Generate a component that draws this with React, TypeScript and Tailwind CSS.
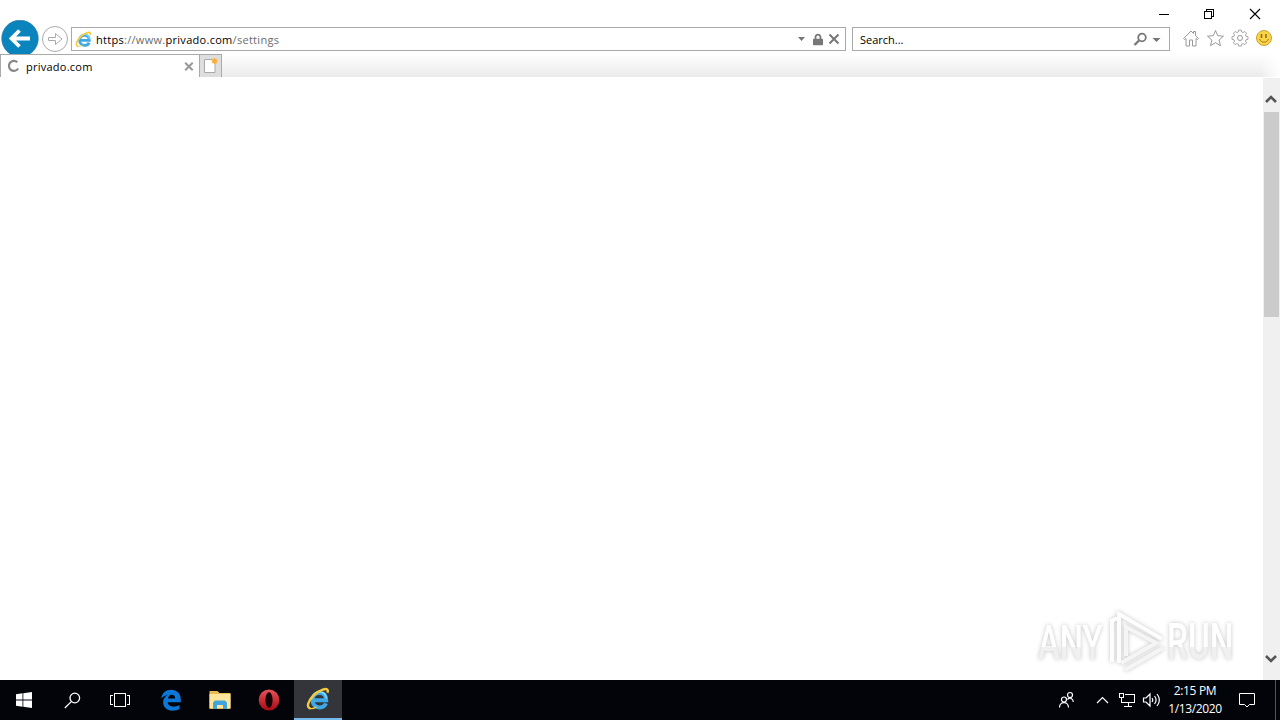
import { FaLock } from 'react-icons/fa';

function IeLogo({ size }: { size: number }) {
  return (
    <svg width={size} height={size} viewBox="0 0 24 24" fill="none">
      <path d="M6 13.300h14.200c0-4.800-2.600-7.300-6.700-7.300s-7 3-7 7 2.800 7.400 7.200 7.400c3.200 0 5.200-1.400 6.200-4" stroke="#3fa9e8" strokeWidth="4" />
      <path d="M5.500 12.500C6 8.500 9 5 13.200 5s6.800 2.800 7.200 6.500" stroke="#8adcf9" strokeWidth="1.500" />
      <path d="M4.500 21.500C-.5 20.500 2.500 13 8.500 7.500 14 2.600 20.500.8 21.600 3c.4.900.2 1.700-.2 2.700" stroke="#f3cb3c" strokeWidth="2.400" />
      <path d="M4 21.500c2 .6 4.500-.3 6.500-1.600" stroke="#f3cb3c" strokeWidth="1.300" />
    </svg>
  );
}

function TitleBar() {
  return (
    <div className="flex h-5 shrink-0 justify-end pt-2 pr-[18px]">
      <svg width="104" height="12" viewBox="0 0 104 12" fill="none" stroke="#000" shapeRendering="crispEdges">
        <path d="M1 6.500h10" />
        <path d="M46.500 3.500h7v7h-7zM48.500 3.500v-2h7v7h-2" />
        <path d="M92 1l10 10M102 1L92 11" shapeRendering="auto" strokeWidth="1.100" />
      </svg>
    </div>
  );
}

function AddressRow() {
  return (
    <div className="flex h-[34px] shrink-0 items-start">
      <svg className="shrink-0" width="71" height="38" viewBox="0 0 71 38" fill="none">
        <circle cx="20" cy="18.500" r="18.300" fill="#0a84bd" stroke="#2c739a" strokeWidth=".6" />
        <path d="M30 18.500H12M19.500 10.500l-8 8 8 8" stroke="#fff" strokeWidth="3.800" />
        <circle cx="55" cy="19" r="12.500" stroke="#aaa" />
        <path d="M48.500 17.500h7v-4l6.500 5.500-6.500 5.500v-4h-7z" stroke="#aaa" />
      </svg>
      <div className="mt-[7px] flex h-6 w-[775px] shrink-0 items-center border border-[#a9a9a9] bg-white pl-[3px]">
        <IeLogo size={17} />
        <span className="ml-1 w-[701px] pt-px font-['Open_Sans'] text-[11px] leading-none tracking-[0.290px] whitespace-pre text-[#6d6d6d]">
          <span className="text-black">https</span>://www.<span className="text-black">privado.com</span>/settings
        </span>
        <svg width="10" height="6" viewBox="0 0 10 6"><path d="M1 1h7L4.500 5z" fill="#777" /></svg>
        <FaLock className="ml-[6px] h-[13px] w-[10px] text-[#777]" />
        <svg className="ml-[5px]" width="12" height="12" viewBox="0 0 12 12" stroke="#777" strokeWidth="2"><path d="M1.500 1.500l9 9M10.500 1.500l-9 9" /></svg>
      </div>
      <div className="mt-[7px] ml-[6px] flex h-6 w-[318px] shrink-0 items-center border border-[#a9a9a9] bg-white pl-[7px]">
        <span className="w-[273px] pt-px font-['Open_Sans'] text-[11px] leading-none text-black">Search...</span>
        <svg width="30" height="16" viewBox="0 0 30 16" fill="none">
          <circle cx="9" cy="6.500" r="3.800" stroke="#777" strokeWidth="1.800" />
          <path d="M6 9.500l-4.500 4.500" stroke="#777" strokeWidth="2.300" />
          <path d="M19.500 7h8l-4 4z" fill="#777" />
        </svg>
      </div>
      <svg className="mt-2 ml-3 shrink-0" width="94" height="20" viewBox="0 0 94 20" fill="none" stroke="#9a9a9a">
        <path d="M1.500 10.500L9 3l2.500 2.500v-2h2v4l3 3-1 1-1.500-1V18h-3.500v-6h-3v6H4v-7.500l-1.500 1z" />
        <path d="M33.500 2.500l2.200 5.200 5.800.5-4.400 3.800 1.400 5.700-5-3.100-5 3.100 1.400-5.700-4.400-3.800 5.800-.5z" />
        <path d="M56.600 2.500h2.800l.5 2.200 1.500.6 2-1.200 1.900 1.900-1.200 2 .6 1.500 2.200.5v2.800l-2.200.5-.6 1.500 1.200 2-1.900 1.900-2-1.200-1.500.6-.5 2.200h-2.800l-.5-2.200-1.500-.6-2 1.200-1.900-1.900 1.200-2-.6-1.500-2.200-.5V10l2.200-.5.6-1.500-1.200-2 1.900-1.900 2 1.200 1.500-.6z" transform="translate(5.800 -.200) scale(.9)" />
        <circle cx="58" cy="10" r="2.500" />
        <circle cx="82" cy="10" r="7.500" fill="#fbd445" stroke="#c8a13c" />
        <path d="M79.500 6v4M84 6v4" stroke="#8a651e" strokeWidth="1.500" />
        <path d="M77.500 11c1.500 4.200 7.500 4.200 9 0" stroke="#9d7424" />
      </svg>
    </div>
  );
}

function TabRow() {
  return (
    <div className="relative flex h-[23px] shrink-0 bg-linear-to-b from-white to-[#ebebeb]">
      <div className="flex w-[200px] items-center border-t border-r border-l border-[#aaa] bg-white pl-[6px]">
        <svg width="14" height="14" viewBox="0 0 14 14" fill="none"><path d="M10.300 3.200A5 5 0 1 0 11.200 9.500" stroke="#888" strokeWidth="2.200" /></svg>
        <span className="ml-[5px] w-[158px] font-['Open_Sans'] text-[11px] leading-none tracking-[0.250px] text-black">privado.com</span>
        <svg width="10" height="9" viewBox="0 0 10 9" stroke="#999" strokeWidth="2"><path d="M1.200.7l7.500 7.500M8.700.7L1.200 8.200" /></svg>
      </div>
      <div className="w-[22px] border-t border-r border-[#aaa] bg-[#dedede]">
        <svg width="21" height="22" viewBox="0 0 21 22">
          <path d="M4.500 4.500h8l2.500 3v10H4.500z" fill="#fff" stroke="#aaa" />
          <circle cx="14.500" cy="6" r="2.500" fill="#ffc34e" />
          <path d="M14.500 3v6M11.500 6h6M12.200 3.700l4.600 4.600M16.800 3.700l-4.600 4.600" stroke="#f5a936" />
        </svg>
      </div>
      <div className="ml-auto w-5 bg-linear-to-r from-transparent to-white" />
    </div>
  );
}

function Watermark() {
  return (
    <svg className="absolute right-[17px] bottom-0.5 drop-shadow-[0_0_2px_#c4c4c4]" width="228" height="72" viewBox="0 0 228 72">
      <defs>
        <linearGradient id="mark" x1="0" y1="0" x2="0" y2="1">
          <stop offset=".58" stopColor="#fff" />
          <stop offset=".58" stopColor="#f0f0f0" />
        </linearGradient>
      </defs>
      <g fill="url(#mark)" fontFamily="Roboto" fontWeight="500" fontSize="49">
        <text transform="translate(3 53) scale(.67 1)">ANY</text>
        <text transform="translate(132 53) scale(.68 1)">RUN</text>
      </g>
      <g fill="none" stroke="#fdfdfd" strokeWidth="4">
        <path d="M77 56V15l5-3M84 57V8L127 33" />
        <path d="M91 50V21L121 37 86 57M90 64L128 42" stroke="#f5f5f5" />
      </g>
    </svg>
  );
}

function Page() {
  return (
    <div className="relative flex h-[603px] shrink-0 justify-end bg-white">
      <Watermark />
      <div className="relative mt-px flex w-[17px] flex-col items-center bg-[#f0f0f0]">
        <svg className="mt-[15px] shrink-0" width="13" height="12" viewBox="0 0 13 12" fill="none" stroke="#555" strokeWidth="2.500"><path d="M1 9l5-5 5 5" /></svg>
        <div className="mt-[7px] h-[205px] w-[15px] bg-[#cbcbcb]" />
        <svg className="mt-auto mb-4 shrink-0" width="13" height="12" viewBox="0 0 13 12" fill="none" stroke="#555" strokeWidth="2.500"><path d="M1 4l5 5 5-5" /></svg>
      </div>
    </div>
  );
}

function Taskbar() {
  return (
    <div className="flex h-10 shrink-0 items-center bg-[#02040a] text-white">
      <div className="flex w-12 justify-center">
        <svg width="16" height="16" viewBox="0 0 16 16" fill="#fff"><path d="M0 2.200l6.500-.9v6.200H0zM7.300 1.200L16 0v7.500H7.300zM0 8.400h6.500v6.300L0 13.800zM7.300 8.400H16V16l-8.700-1.200z" /></svg>
      </div>
      <div className="flex w-12 justify-center">
        <svg width="17" height="17" viewBox="0 0 17 17" fill="none" stroke="#fff" strokeWidth="1.300"><circle cx="10.800" cy="6" r="4.800" /><path d="M7.300 9.600L.8 16" /></svg>
      </div>
      <div className="flex w-12 justify-center">
        <svg width="20" height="14" viewBox="0 0 20 14" fill="none" stroke="#fff" shapeRendering="crispEdges"><path d="M4.500.5h11v13h-11zM3 2.500H.5v9H3M17 2.500h2.500v9H17" /></svg>
      </div>
      <div className="flex w-[54px] justify-center">
        <svg width="22" height="22" viewBox="0 0 22 22" fill="#0b78d7"><path d="M1.200 9.700C2 4 6 .8 11.200.8c6 0 9.600 4.300 9.600 10v2.500H7.700c.3 3 2.800 4.300 5.800 4.300 2.200 0 4.200-.6 6-1.700v4.200c-2 1-4.400 1.600-7 1.600-5.600 0-9.400-3.500-9.400-8.400 0-3.400 1.800-6 4.700-7.400-3 .4-5 1.500-6.600 3.800zM8 9.500h7.200c0-2.400-1.200-3.800-3.400-3.800-2.100 0-3.500 1.500-3.800 3.800z" /></svg>
      </div>
      <div className="flex w-11 justify-center">
        <svg width="22" height="20" viewBox="0 0 22 20">
          <path d="M.5 1h8l2 2h11v16H.5z" fill="#e8bc52" />
          <path d="M.5 4h21v14H.5z" fill="#ffe69a" />
          <path d="M4 19v-6.500l2-2h10l2 2V19h-4v-4H8v4z" fill="#41a5db" />
        </svg>
      </div>
      <div className="flex w-[52px] justify-center pl-0.5">
        <svg width="22" height="22" viewBox="0 0 22 22">
          <defs><linearGradient id="opera" x1="0" y1="0" x2="0" y2="1"><stop stopColor="#e65359" /><stop offset="1" stopColor="#a80a12" /></linearGradient></defs>
          <ellipse cx="11" cy="11" rx="10.300" ry="10.500" fill="url(#opera)" />
          <ellipse cx="11" cy="11" rx="3.600" ry="7.800" fill="#130306" />
        </svg>
      </div>
      <div className="flex h-full w-12 items-center justify-center border-b-2 border-[#76b9ed] bg-[#33353b]">
        <IeLogo size={24} />
      </div>
      <div className="ml-auto flex h-full items-center">
        <svg width="102" height="20" viewBox="0 0 102 20" fill="none" stroke="#fff" strokeWidth="1.200">
          <circle cx="5" cy="9.500" r="2.500" /><path d="M.5 17.500c0-6.500 9-6.500 9 0" />
          <circle cx="11" cy="5" r="2.500" /><path d="M8.500 9.500c2.500-2.500 5.500-1 5.800 2.500" />
          <path d="M38 13l5.500-5.500L49 13" />
          <path d="M65.500 4.500h10v8h-13v-4M69.500 12.500v4M65 16.500h8M60.500 3.500h4v4h-4zM62.500 7.500v2" shapeRendering="crispEdges" />
          <path d="M84.500 8h2.500l4-4v12l-4-4h-2.500zM93 8c1 1.300 1 2.700 0 4M95.500 6c2 2.500 2 5.500 0 8M98 4c3 3.800 3 8.200 0 12" />
        </svg>
        <div className="ml-px w-[66px] text-center font-['Open_Sans'] text-[12px] leading-[18px] tracking-[-0.350px] whitespace-nowrap">
          <div>2:15 PM</div>
          <div>1/13/2020</div>
        </div>
        <svg className="ml-[10px]" width="18" height="18" viewBox="0 0 18 18" fill="none" stroke="#fff"><path d="M1.500 2.500h15v11h-5L9 16l-2.500-2.500h-5z" /></svg>
        <div className="ml-[19px] h-full w-[5px] border-l border-[#555]" />
      </div>
    </div>
  );
}

export default function App() {
  return (
    <div className="flex h-[720px] w-[1280px] flex-col overflow-hidden bg-white">
      <TitleBar />
      <AddressRow />
      <TabRow />
      <Page />
      <Taskbar />
    </div>
  );
}
